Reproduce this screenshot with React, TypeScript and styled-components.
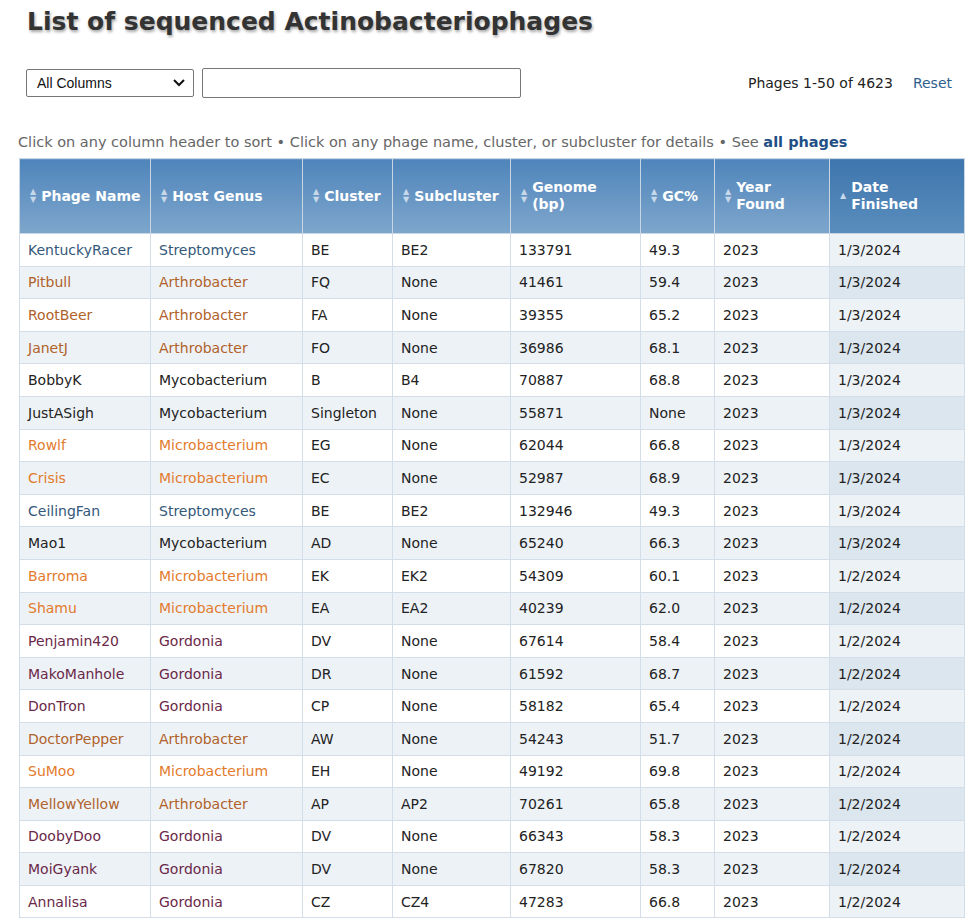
import React from 'react'
import styled, { createGlobalStyle } from 'styled-components'

const Global = createGlobalStyle`
    body { margin: 0; background: #fff; font-family: "DejaVu Sans", Verdana, sans-serif; color: #222; }
`
const Page = styled.div`
    padding: 6px 7px 0 19px;
`
const Title = styled.h1`
    margin: 0 0 0 8px;
    font-size: 25px;
    font-weight: bold;
    color: #333;
    text-shadow: 1px 2px 3px rgba(0, 0, 0, 0.35);
    line-height: 32px;
`
const Toolbar = styled.div`
    display: flex;
    align-items: center;
    margin: 30px 0 0 7px;
    height: 30px;
`
const Select = styled.div`
    width: 168px;
    height: 28px;
    border: 1px solid #777;
    border-radius: 2px;
    display: flex;
    align-items: center;
    justify-content: space-between;
    padding: 0 8px 0 10px;
    box-sizing: border-box;
    font-family: "Liberation Sans", Arial, sans-serif;
    font-size: 14px;
    color: #111;
`
const Search = styled.div`
    width: 319px;
    height: 30px;
    border: 1px solid #777;
    border-radius: 2px;
    box-sizing: border-box;
    margin-left: 8px;
`
const Count = styled.div`
    margin-left: auto;
    font-size: 14px;
    color: #222;
`
const Reset = styled.span`
    color: #2f5f8f;
    margin: 0 12px 0 20px;
    font-size: 14px;
`
const Hint = styled.div`
    margin-top: 36px;
    font-size: 14.5px;
    color: #666;
    white-space: nowrap;
    margin-left: -1px;
`
const Strong = styled.b`
    color: #1f4f85;
`
const Table = styled.table`
    border-collapse: collapse;
    width: 945px;
    margin-top: 8px;
    font-size: 14px;
    table-layout: fixed;
`
const Th = styled.th<{ $active?: boolean }>`
    height: 74px;
    padding: 0 6px 0 10px;
    text-align: left;
    color: #fff;
    font-size: 14px;
    line-height: 17px;
    border: 1px solid #c8d6e4;
    background: ${p =>
        p.$active
            ? 'linear-gradient(#3e76ad, #5a8dbd)'
            : 'linear-gradient(#4f85bb, #7ea6cc)'};
    vertical-align: middle;
`
const HeadInner = styled.div`
    display: flex;
    align-items: center;
    gap: 5px;
`
const Arrow = styled.span`
    font-size: 8px;
    color: #c7d8ea;
    line-height: 8px;
    display: flex;
    flex-direction: column;
`
const Tr = styled.tr<{ $alt: boolean }>`
    background: ${p => (p.$alt ? '#edf2f7' : '#fff')};
`
const Td = styled.td<{ $color?: string; $date?: boolean; $alt?: boolean }>`
    height: 31.6px;
    padding: 0 8px;
    border: 1px solid #d3dee8;
    color: ${p => p.$color || '#222'};
    white-space: nowrap;
    overflow: hidden;
    background: ${p => (p.$date ? (p.$alt ? '#dce6ef' : '#edf2f7') : 'transparent')};
`

const hostColor: Record<string, string> = {
    Streptomyces: '#34587a',
    Arthrobacter: '#b0622a',
    Microbacterium: '#e37b2c',
    Mycobacterium: '#222',
    Gordonia: '#6a2848',
}

const rows: string[][] = [
    ['KentuckyRacer', 'Streptomyces', 'BE', 'BE2', '133791', '49.3', '2023', '1/3/2024'],
    ['Pitbull', 'Arthrobacter', 'FQ', 'None', '41461', '59.4', '2023', '1/3/2024'],
    ['RootBeer', 'Arthrobacter', 'FA', 'None', '39355', '65.2', '2023', '1/3/2024'],
    ['JanetJ', 'Arthrobacter', 'FO', 'None', '36986', '68.1', '2023', '1/3/2024'],
    ['BobbyK', 'Mycobacterium', 'B', 'B4', '70887', '68.8', '2023', '1/3/2024'],
    ['JustASigh', 'Mycobacterium', 'Singleton', 'None', '55871', 'None', '2023', '1/3/2024'],
    ['Rowlf', 'Microbacterium', 'EG', 'None', '62044', '66.8', '2023', '1/3/2024'],
    ['Crisis', 'Microbacterium', 'EC', 'None', '52987', '68.9', '2023', '1/3/2024'],
    ['CeilingFan', 'Streptomyces', 'BE', 'BE2', '132946', '49.3', '2023', '1/3/2024'],
    ['Mao1', 'Mycobacterium', 'AD', 'None', '65240', '66.3', '2023', '1/3/2024'],
    ['Barroma', 'Microbacterium', 'EK', 'EK2', '54309', '60.1', '2023', '1/2/2024'],
    ['Shamu', 'Microbacterium', 'EA', 'EA2', '40239', '62.0', '2023', '1/2/2024'],
    ['Penjamin420', 'Gordonia', 'DV', 'None', '67614', '58.4', '2023', '1/2/2024'],
    ['MakoManhole', 'Gordonia', 'DR', 'None', '61592', '68.7', '2023', '1/2/2024'],
    ['DonTron', 'Gordonia', 'CP', 'None', '58182', '65.4', '2023', '1/2/2024'],
    ['DoctorPepper', 'Arthrobacter', 'AW', 'None', '54243', '51.7', '2023', '1/2/2024'],
    ['SuMoo', 'Microbacterium', 'EH', 'None', '49192', '69.8', '2023', '1/2/2024'],
    ['MellowYellow', 'Arthrobacter', 'AP', 'AP2', '70261', '65.8', '2023', '1/2/2024'],
    ['DoobyDoo', 'Gordonia', 'DV', 'None', '66343', '58.3', '2023', '1/2/2024'],
    ['MoiGyank', 'Gordonia', 'DV', 'None', '67820', '58.3', '2023', '1/2/2024'],
    ['Annalisa', 'Gordonia', 'CZ', 'CZ4', '47283', '66.8', '2023', '1/2/2024'],
]

const headers: [string, number][] = [
    ['Phage Name', 131],
    ['Host Genus', 152],
    ['Cluster', 90],
    ['Subcluster', 118],
    ['Genome (bp)', 130],
    ['GC%', 74],
    ['Year Found', 115],
    ['Date Finished', 135],
]

const Sort = ({ up }: { up?: boolean }) =>
    up ? (
        <Arrow>▲</Arrow>
    ) : (
        <Arrow>
            <span>▲</span>
            <span>▼</span>
        </Arrow>
    )

const App = () => (
    <Page>
        <Global />
        <Title>List of sequenced Actinobacteriophages</Title>
        <Toolbar>
            <Select>
                All Columns
                <svg width="12" height="8" viewBox="0 0 12 8">
                    <path d="M1 1l5 5 5-5" stroke="#111" strokeWidth="2" fill="none" />
                </svg>
            </Select>
            <Search />
            <Count>Phages 1-50 of 4623</Count>
            <Reset>Reset</Reset>
        </Toolbar>
        <Hint>
            Click on any column header to sort • Click on any phage name, cluster, or subcluster for
            details • See <Strong>all phages</Strong>
        </Hint>
        <Table>
            <colgroup>
                {headers.map(([h, w]) => (
                    <col key={h} style={{ width: w }} />
                ))}
            </colgroup>
            <thead>
                <tr>
                    {headers.map(([h], i) => (
                        <Th key={h} $active={i === 7}>
                            <HeadInner>
                                <Sort up={i === 7} />
                                <span>{h}</span>
                            </HeadInner>
                        </Th>
                    ))}
                </tr>
            </thead>
            <tbody>
                {rows.map((r, i) => {
                    const c = hostColor[r[1]]
                    const alt = i % 2 === 1
                    return (
                        <Tr key={r[0]} $alt={alt}>
                            <Td $color={c}>{r[0]}</Td>
                            <Td $color={c}>{r[1]}</Td>
                            {r.slice(2, 7).map((v, j) => (
                                <Td key={j}>{v}</Td>
                            ))}
                            <Td $date $alt={alt}>
                                {r[7]}
                            </Td>
                        </Tr>
                    )
                })}
            </tbody>
        </Table>
    </Page>
)

export default App
